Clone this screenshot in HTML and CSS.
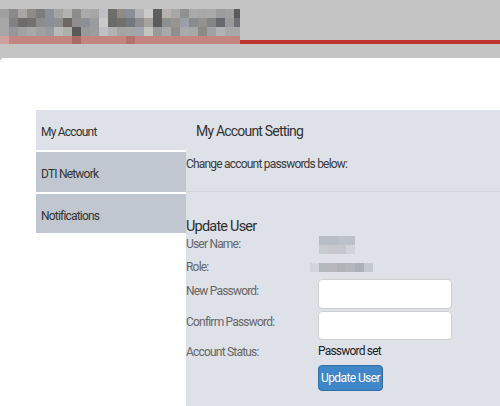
FILE: index.html
```html
<!DOCTYPE html>
<html>
<head>
<meta charset="utf-8">
<link rel="stylesheet" href="styles.css">
</head>
<body>
<header class="topbar">
  <div class="brand">
    <div class="logo">
      <div class="px-row r1"></div>
      <div class="px-row r2"></div>
      <div class="px-row r3"></div>
      <div class="px-row r4"></div>
    </div>
    <div class="redline"></div>
  </div>
</header>
<main class="page">
  <nav class="sidenav">
    <a class="nav-item active">My Account</a>
    <a class="nav-item">DTI Network</a>
    <a class="nav-item">Notifications</a>
  </nav>
  <section class="panel">
    <h1 class="panel-title">My Account Setting</h1>
    <p class="intro">Change account passwords below:</p>
    <hr class="divider">
    <h2 class="sub-title">Update User</h2>
    <div class="form">
      <div class="row r-name">
        <span class="label">User Name:</span>
        <span class="blur blur-name"></span>
      </div>
      <div class="row r-role">
        <span class="label">Role:</span>
        <span class="blur blur-role"></span>
      </div>
      <div class="row r-input">
        <label class="label">New Password:</label>
        <input class="field" type="password">
      </div>
      <div class="row r-input r-input2">
        <label class="label">Confirm Password:</label>
        <input class="field" type="password">
      </div>
      <div class="row r-status">
        <span class="label">Account Status:</span>
        <span class="value">Password set</span>
      </div>
      <div class="row r-btn">
        <span class="label"></span>
        <button class="btn">Update User</button>
      </div>
    </div>
  </section>
</main>
</body>
</html>
```
FILE: styles.css
```css
* { box-sizing: border-box; }
html, body { margin: 0; padding: 0; }
body {
  background: #c4c4c4;
  font-family: Roboto, "Liberation Sans", sans-serif;
  font-size: 12px;
  letter-spacing: -0.8px;
  color: #333;
  height: 406px;
  overflow: hidden;
}
.topbar {
  height: 58px;
  padding-top: 9px;
}
.brand {
  display: flex;
  align-items: flex-end;
  height: 35px;
}
.logo {
  width: 240px;
  display: flex;
  flex-direction: column;
}
.px-row { height: 9px; }
.px-row.r4 { height: 8px; }
.r1 {
  background: linear-gradient(to right,
    #a0a0a0 0 9px, #8a8a8a 9px 18px, #a8a6a2 18px 27px, #8e8a86 27px 36px, #7c7c7e 36px 45px,
    #8c929c 45px 54px, #a6a4a0 54px 63px, #b2b2b0 63px 72px, #8c8c8c 72px 81px, #aaaaaa 81px 90px,
    #a6a6a6 90px 99px, #c0c0c4 99px 108px, #6e6e6a 108px 117px, #908a84 117px 126px, #8a909a 126px 135px,
    #b2b2b4 135px 144px, #cacaca 144px 153px, #5e5e60 153px 162px, #b6b2ae 162px 171px, #a8a8a8 171px 180px,
    #909090 180px 189px, #aaaaaa 189px 198px, #a8a8a8 198px 207px, #aaaaaa 207px 216px, #9c9c9c 216px 225px,
    #a0a0a0 225px 234px, #5a5a5c 234px 240px);
}
.r2 {
  background: linear-gradient(to right,
    #a8a8a8 0 9px, #828282 9px 18px, #6e6c6a 18px 27px, #747270 27px 36px, #8c8c8e 36px 45px,
    #8a8e96 45px 54px, #909090 54px 63px, #6e6660 63px 72px, #8e8e8e 72px 81px, #8a9098 81px 90px,
    #9a9c9e 90px 99px, #cacaca 99px 108px, #6a6a66 108px 117px, #70706e 117px 126px, #727880 126px 135px,
    #8e8e8e 135px 144px, #a6a29e 144px 153px, #5a5c60 153px 162px, #8c9090 162px 171px, #9a948e 171px 180px,
    #9ca0a6 180px 189px, #888c90 189px 198px, #94928e 198px 207px, #868482 207px 216px, #646a70 216px 225px,
    #9a9a9a 225px 234px, #707074 234px 240px);
}
.r3 {
  background: linear-gradient(to right,
    #a6a6a6 0 9px, #94969a 9px 18px, #a2a2a2 18px 27px, #a8a8a8 27px 36px, #a0a0a0 36px 45px,
    #989aa0 45px 54px, #bababa 54px 63px, #b0aeaa 63px 72px, #585858 72px 81px, #969a9c 81px 90px,
    #9a9c9e 90px 99px, #c0c0c4 99px 108px, #b2b2b2 108px 117px, #a6a4a2 117px 126px, #a6a6a6 126px 135px,
    #a0a6b0 135px 144px, #c4c4c0 144px 153px, #9a9a9a 153px 162px, #a8a8a8 162px 171px, #8e8e8e 171px 180px,
    #aaaaaa 180px 189px, #a8a8a8 189px 198px, #8c8a86 198px 207px, #a0a2a6 207px 216px, #b2b2b2 216px 225px,
    #a8a8a8 225px 234px, #a8a8a8 234px 240px);
}
.r4 {
  background: linear-gradient(to right,
    #cfa0a0 0 9px, #c48480 9px 72px, #a86a66 72px 81px, #c48480 81px 126px,
    #b4726e 126px 135px, #c48480 135px 240px);
}
.redline {
  flex: 1;
  height: 4px;
  background: #c0342e;
}
.page {
  background: #fff;
  border-top-left-radius: 4px;
  height: 348px;
  padding: 52px 0 0 36px;
  display: flex;
}
.sidenav {
  width: 150px;
  display: flex;
  flex-direction: column;
  gap: 2px;
  flex-shrink: 0;
}
.nav-item {
  height: 40px;
  display: flex;
  align-items: center;
  padding-left: 5px;
  padding-top: 4px;
  background: #c1c7d1;
  color: #333;
}
.nav-item:nth-child(3) { height: 39px; }
.nav-item.active { background: #dee1e8; }
.panel {
  flex: 1;
  background: #dee1e8;
}
.panel-title {
  margin: 0;
  height: 41px;
  padding: 12px 10px 0;
  font-size: 14px;
  line-height: 18px;
  font-weight: normal;
  color: #333;
}
.intro {
  margin: 0;
  padding-top: 5px;
  height: 40px;
  line-height: 16px;
  color: #3a3a3a;
}
.divider {
  margin: 0;
  border: 0;
  height: 1px;
  background: #d4d7dd;
}
.sub-title {
  margin: 0;
  padding-top: 26px;
  font-size: 14.5px;
  line-height: 18px;
  font-weight: normal;
  color: #2e2e2e;
}
.form { display: flex; flex-direction: column; }
.row { display: flex; align-items: flex-start; }
.label {
  width: 132px;
  flex-shrink: 0;
  line-height: 16px;
  color: #666;
}
.r-name { height: 22px; }
.r-role { height: 21px; padding-top: 1px; }
.r-input .label { padding-top: 4px; }
.r-input { height: 32px; }
.r-input2 { height: 30px; }
.r-input2 .label { padding-top: 3px; }
.field {
  width: 134px;
  height: 30px;
  border: 1px solid #cfcfcf;
  border-radius: 4px;
  background: #fff;
  margin: 0;
}
.r-input2 .field { height: 29px; }
.r-status { height: 24px; padding-top: 3px; }
.value { line-height: 16px; color: #222; margin-top: -1px; }
.btn {
  width: 65px;
  height: 26px;
  padding: 0;
  background: #3f87c9;
  border: 1px solid #2f6ea6;
  border-radius: 4px;
  color: #fff;
  font-family: inherit;
  font-size: 12px;
  letter-spacing: -0.6px;
}
.blur { display: block; }
.blur-name {
  width: 36px;
  height: 18px;
  margin-left: 1px;
  background:
    linear-gradient(to right, #b8bcc4 0 18px, #bcc0c8 18px 36px) top / 100% 9px no-repeat,
    linear-gradient(to right, #c8ccd2 0 9px, #c8c8cc 9px 18px, #c4c8ce 18px 27px, #d0d4da 27px 36px) bottom / 100% 9px no-repeat;
}
.blur-role {
  width: 63px;
  height: 9px;
  margin-top: 4px;
  margin-left: -8px;
  background: linear-gradient(to right, #d2d5dc 0 9px, #b4b8c0 9px 18px, #b8b8bc 18px 27px, #b0b2b8 27px 36px, #b4b6bc 36px 45px, #acb0b8 45px 54px, #c4c8d0 54px 63px);
}
```
